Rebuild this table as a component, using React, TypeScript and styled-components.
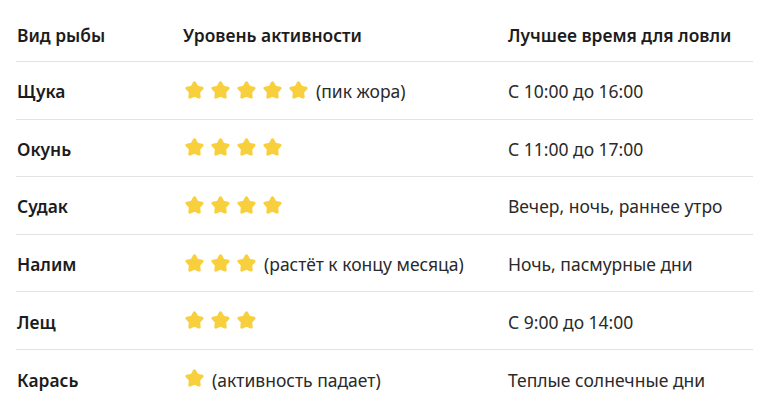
import React from "react";
import styled, { createGlobalStyle } from "styled-components";

const Global = createGlobalStyle`
  html, body { margin: 0; padding: 0; background: #ffffff; }
  body { font-family: "Noto Sans", "Open Sans", sans-serif; color: #1f1f1f; }
`;

const Page = styled.div`
  padding: 8px 18px 0 16px;
  width: 737px;
`;

const Row = styled.div<{ $head?: boolean; $last?: boolean }>`
  display: grid;
  grid-template-columns: 166px 325px 1fr;
  align-items: center;
  height: ${(p) => (p.$head ? "54px" : "57.6px")};
  box-sizing: border-box;
  border-bottom: ${(p) => (p.$last ? "none" : "1px solid #e3e3e3")};
  padding-left: 1px;
  padding-top: ${(p) => (p.$head ? "0" : "2px")};
`;

const HeadCell = styled.div`
  font-size: 17.4px;
  font-weight: 600;
  color: #1c1c1c;
  white-space: nowrap;
`;

const Name = styled.div`
  font-size: 17.4px;
  font-weight: 600;
  color: #1c1c1c;
`;

const Text = styled.div`
  font-size: 17.5px;
  font-weight: 400;
  color: #2a2a2a;
  white-space: nowrap;
`;

const Activity = styled.div`
  display: flex;
  align-items: center;
  gap: 8px;
  padding-left: 2px;
  font-size: 17.5px;
  color: #2a2a2a;
  white-space: nowrap;
`;

const Stars = styled.div`
  display: flex;
  align-items: center;
  gap: 7px;
  margin-top: -3px;
`;

const StarSvg = styled.svg`
  width: 19px;
  height: 18px;
  display: block;
`;

const Star = () => (
  <StarSvg viewBox="1 1.5 22 21">
    <path
      d="M12 3.6 L14.94 8.75 L20.75 9.96 L16.76 14.35 L17.41 20.24 L12 17.8 L6.59 20.24 L7.24 14.35 L3.25 9.96 L9.06 8.75 Z"
      fill="#f8cf3c"
      stroke="#f8cf3c"
      strokeWidth="3.6"
      strokeLinejoin="round"
    />
  </StarSvg>
);

const data = [
  { name: "Щука", stars: 5, note: "(пик жора)", time: "С 10:00 до 16:00" },
  { name: "Окунь", stars: 4, note: "", time: "С 11:00 до 17:00" },
  { name: "Судак", stars: 4, note: "", time: "Вечер, ночь, раннее утро" },
  { name: "Налим", stars: 3, note: "(растёт к концу месяца)", time: "Ночь, пасмурные дни" },
  { name: "Лещ", stars: 3, note: "", time: "С 9:00 до 14:00" },
  { name: "Карась", stars: 1, note: "(активность падает)", time: "Теплые солнечные дни" },
];

export default function App() {
  return (
    <>
      <Global />
      <Page>
        <Row $head>
          <HeadCell>Вид рыбы</HeadCell>
          <HeadCell>Уровень активности</HeadCell>
          <HeadCell>Лучшее время для ловли</HeadCell>
        </Row>
        {data.map((d, i) => (
          <Row key={d.name} $last={i === data.length - 1}>
            <Name>{d.name}</Name>
            <Activity>
              <Stars>
                {Array.from({ length: d.stars }).map((_, k) => (
                  <Star key={k} />
                ))}
              </Stars>
              {d.note && <span>{d.note}</span>}
            </Activity>
            <Text>{d.time}</Text>
          </Row>
        ))}
      </Page>
    </>
  );
}
